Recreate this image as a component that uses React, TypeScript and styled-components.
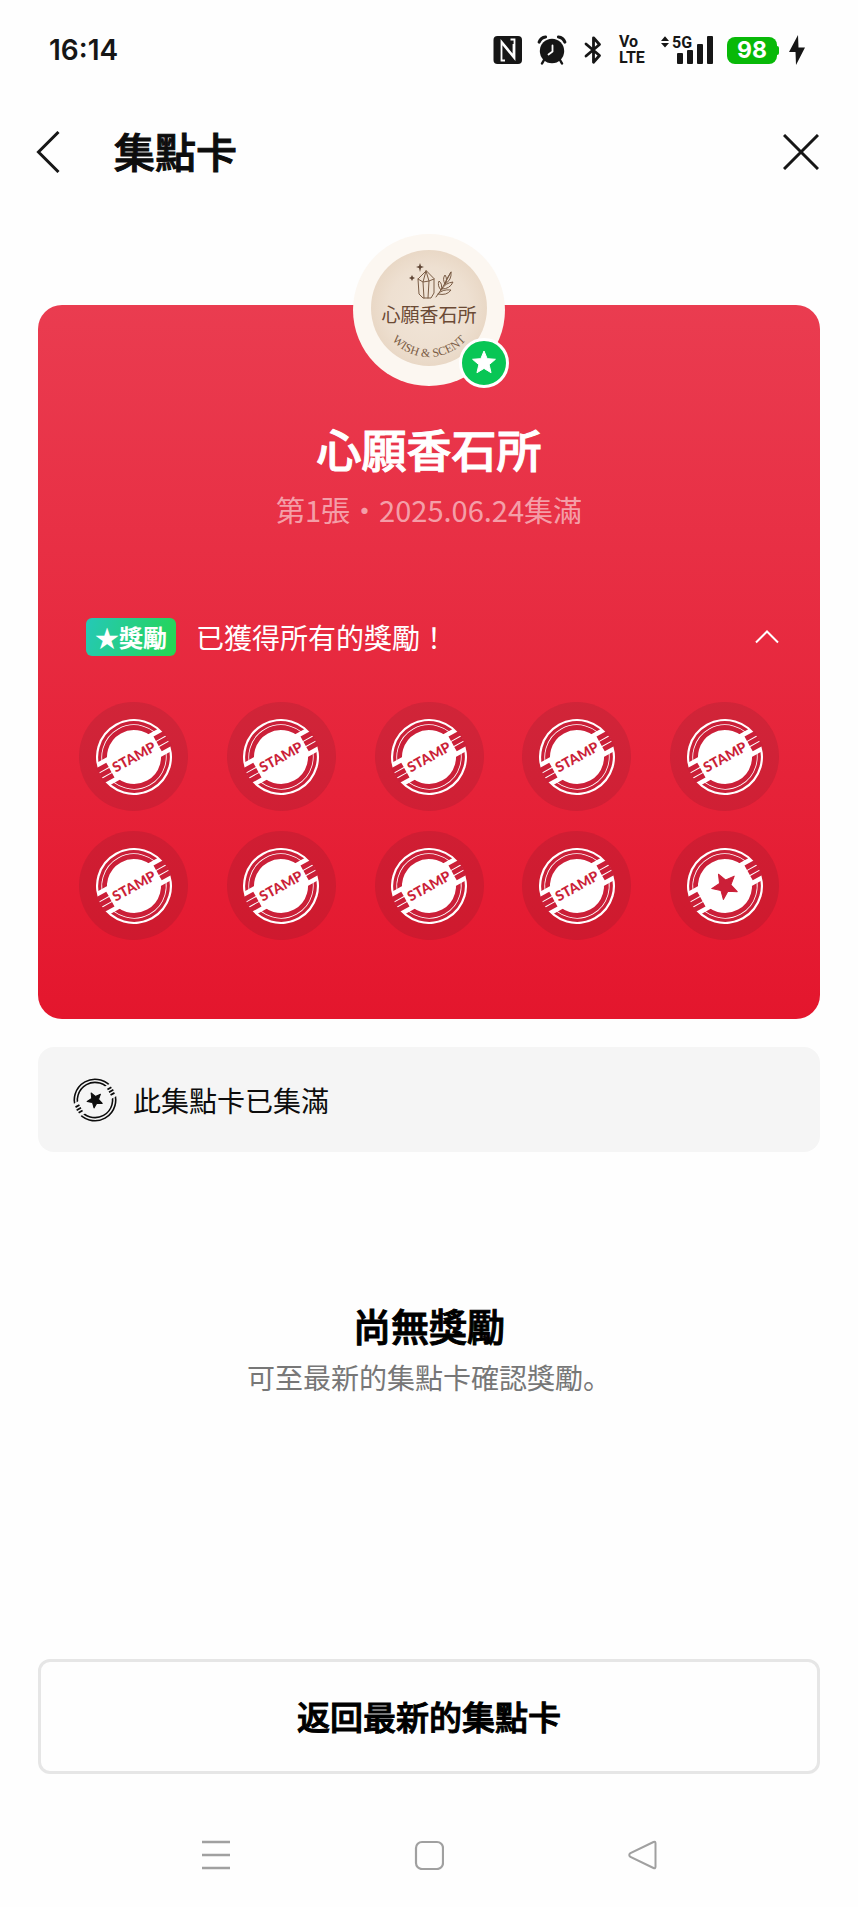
import React from "react";
import styled, { createGlobalStyle } from "styled-components";

const GlobalStyle = createGlobalStyle`
  *, *::before, *::after { box-sizing: border-box; }
  body {
    margin: 0;
    background: #fefefe;
    color: #0d0d0d;
    font-family: "Noto Sans CJK JP", "Noto Sans", sans-serif;
  }
  h1, h2, h3, p, ul { margin: 0; padding: 0; }
  button {
    border: 0;
    padding: 0;
    background: none;
    color: inherit;
    font: inherit;
    cursor: pointer;
  }
  svg { display: block; flex: none; }
`;

const Page = styled.div`
  min-height: 100vh;
  display: flex;
  flex-direction: column;
`;

const StatusBar = styled.div`
  height: 100px;
  padding: 0 53px 0 49px;
  display: flex;
  align-items: center;
  justify-content: space-between;
  color: #161616;
`;

const Clock = styled.time`
  font: 600 28px/40px Inter, sans-serif;
`;

const StatusIcons = styled.div`
  display: flex;
  align-items: center;
  gap: 14px;
`;

const PowerGroup = styled.div`
  display: flex;
  align-items: center;
  gap: 10px;
`;

const VoLte = styled.span`
  width: 28px;
  display: flex;
  flex-direction: column;
  font: 700 16px/16px Roboto, sans-serif;
`;

const Battery = styled.span`
  position: relative;
  width: 50px;
  height: 27px;
  margin-right: 2px;
  border-radius: 8px;
  background: #08b908;
  color: #fff;
  text-align: center;
  font: 700 23px/27px Inter, sans-serif;

  &::after {
    content: "";
    position: absolute;
    left: 100%;
    top: 9px;
    width: 2px;
    height: 9px;
    border-radius: 0 2px 2px 0;
    background: #08b908;
  }
`;

const Header = styled.header`
  height: 104px;
  padding: 0 33px 0 24px;
  display: flex;
  align-items: center;
`;

const IconButton = styled.button`
  width: 48px;
  height: 56px;
  display: grid;
  place-items: center;
`;

const PageTitle = styled.h1`
  flex: 1;
  margin-left: 42px;
  padding-bottom: 4px;
  font-size: 41px;
  line-height: 56px;
  font-weight: 500;
  -webkit-text-stroke: 1px currentColor;
`;

const Content = styled.main`
  flex: 1;
  padding: 101px 38px 0;
`;

const Card = styled.section`
  display: flex;
  flex-direction: column;
  align-items: center;
  padding: 0 41px 79px;
  border-radius: 24px;
  background: linear-gradient(#ea3c50, #e4162d);
  color: #fff;
`;

const Avatar = styled.div`
  position: relative;
  margin-top: -71px;
`;

const AvatarBadge = styled.span`
  position: absolute;
  right: -4px;
  bottom: -2px;
  width: 50px;
  height: 50px;
  display: grid;
  place-items: center;
  border: 3px solid #fff;
  border-radius: 50%;
  background: #08c655;
`;

const ShopName = styled.h2`
  margin-top: 35px;
  font-size: 45px;
  line-height: 56px;
  font-weight: 500;
  -webkit-text-stroke: 1px currentColor;
`;

const CardInfo = styled.p`
  margin-top: 12px;
  font-size: 29px;
  line-height: 40px;
  color: rgba(255, 255, 255, 0.55);
`;

const RewardToggle = styled.button`
  align-self: stretch;
  margin-top: 88px;
  padding: 0 0 0 7px;
  display: flex;
  align-items: center;
  text-align: left;
  font-size: 28px;
  line-height: 40px;
`;

const RewardTag = styled.span`
  height: 38px;
  padding: 0 9px;
  border-radius: 6px;
  background: linear-gradient(110deg, #25c8b8, #25d650);
  font-size: 24px;
  line-height: 38px;
  font-weight: 700;
`;

const RewardText = styled.span`
  flex: 1;
  margin-left: 20px;
`;

const StampGrid = styled.ul`
  align-self: stretch;
  margin-top: 45px;
  display: grid;
  grid-template-columns: repeat(5, 109px);
  justify-content: space-between;
  row-gap: 20px;
  list-style: none;
`;

const StampSlot = styled.li`
  height: 109px;
  display: grid;
  place-items: center;
  border-radius: 50%;
  background: rgba(20, 20, 30, 0.1);
`;

const Notice = styled.p`
  margin-top: 28px;
  min-height: 105px;
  padding: 0 35px;
  display: flex;
  align-items: center;
  gap: 16px;
  border-radius: 16px;
  background: #f5f5f5;
  font-size: 28px;
  line-height: 40px;
`;

const EmptyState = styled.section`
  margin: 147px 0 60px;
  text-align: center;
`;

const EmptyTitle = styled.h3`
  color: #000;
  font-size: 38px;
  line-height: 52px;
  font-weight: 500;
  -webkit-text-stroke: 1px currentColor;
`;

const EmptyText = styled.p`
  margin-top: 6px;
  font-size: 28px;
  line-height: 40px;
  color: #777;
`;

const Footer = styled.footer`
  padding: 0 38px 29px;
`;

const LatestCardButton = styled.button`
  width: 100%;
  height: 115px;
  padding-bottom: 2px;
  border: 3px solid #e6e6e6;
  border-radius: 12px;
  color: #000;
  font-size: 33px;
  font-weight: 500;
  -webkit-text-stroke: 1px currentColor;
`;

const SystemNav = styled.nav`
  height: 104px;
  padding: 0 110px;
  display: grid;
  grid-template-columns: repeat(3, 1fr);
  place-items: center;
`;

/** Points of a five-pointed star centred on the origin. */
function starPoints(outer: number, inner: number, turn = 0): string {
  return Array.from({ length: 10 }, (_, i) => {
    const r = i % 2 ? inner : outer;
    const a = ((i * 36 - 90 + turn) * Math.PI) / 180;
    return `${(r * Math.cos(a)).toFixed(2)},${(r * Math.sin(a)).toFixed(2)}`;
  }).join(" ");
}

const STAMP_RED = "#cb1f38";

function Stamp({ goal }: { goal?: boolean }) {
  return (
    <svg width="76" height="76" viewBox="-38 -38 76 76" role="img" aria-label={goal ? "完成" : "已蓋章"}>
      <defs>
        <clipPath id="stamp-halves">
          <rect x="-40" y="-40" width="80" height="27" />
          <rect x="-40" y="13" width="80" height="27" />
        </clipPath>
      </defs>
      <g transform="rotate(-29)">
        <circle r="38" fill="#fff" />
        <g clipPath="url(#stamp-halves)" fill="none" stroke={STAMP_RED}>
          <circle r="34.2" strokeWidth="3.2" />
          <circle r="29.4" strokeWidth="4.8" />
        </g>
        {[-1, 1].map((side) => (
          <g key={side} transform={`scale(${side} 1)`} fill={STAMP_RED}>
            <path d="M27-8.500H38.500V-3.400H27ZM27-2.400H38.500V2.400H27ZM27 3.400H38.500V8.500H27Z" />
          </g>
        ))}
        {goal ? (
          <polygon
            points={starPoints(13.5, 6)}
            fill={STAMP_RED}
            stroke={STAMP_RED}
            strokeWidth="1"
            strokeLinejoin="round"
          />
        ) : (
          <text
            y="5"
            textAnchor="middle"
            fill={STAMP_RED}
            fontFamily="Lato, sans-serif"
            fontWeight="900"
            fontSize="14"
          >
            STAMP
          </text>
        )}
      </g>
    </svg>
  );
}

function StampOutline() {
  return (
    <svg width="44" height="44" viewBox="-22 -22 44 44" aria-hidden="true">
      <defs>
        <clipPath id="outline-halves">
          <rect x="-24" y="-24" width="48" height="17" />
          <rect x="-24" y="7" width="48" height="17" />
        </clipPath>
      </defs>
      <g transform="rotate(-29)">
        <g clipPath="url(#outline-halves)" fill="none" stroke="#0d0d0d">
          <circle r="20.7" strokeWidth="1.6" />
          <circle r="17.6" strokeWidth="1.6" />
        </g>
        <path
          d="M16-3.200H20.500M16 0H21M16 3.200H20.500M-16-3.200H-20.500M-16 0H-21M-16 3.200H-20.500"
          stroke="#0d0d0d"
          strokeWidth="1.8"
        />
        <polygon points={starPoints(8, 3.6)} fill="#0d0d0d" stroke="#0d0d0d" strokeLinejoin="round" />
      </g>
    </svg>
  );
}

function ShopLogo() {
  return (
    <svg width="152" height="152" viewBox="-76 -76 152 152" role="img" aria-label="心願香石所 Wish & Scent">
      <defs>
        <radialGradient id="paper">
          <stop offset="0" stopColor="#f1e5d8" />
          <stop offset="0.7" stopColor="#eee0d1" />
          <stop offset="1" stopColor="#e9d8c6" />
        </radialGradient>
        <path id="motto-arc" d="M-49-2A49 49 0 0 0 49-2" />
      </defs>
      <circle r="76" fill="#fcf7f1" />
      <circle cy="-2" r="58" fill="url(#paper)" />
      <g fill="none" stroke="#7a5c45" strokeWidth="1" strokeLinejoin="round" strokeLinecap="round">
        <path d="M-3-39L-11-31-10-16-6-12 2-12 5-17 5-31ZM-11-31L-6-28 0-29 5-31M-3-39L-6-28-5-12M-3-39L0-29-1-12" />
        <path d="M7-13Q14-22 22-38M12-20Q8-24 10-29Q14-26 12-20M16-26Q13-31 16-35Q19-31 16-26M16-26Q17-31 22-38Q23-30 16-26M13-21Q16-27 24-28Q21-21 13-21M9-16Q13-21 22-20Q18-14 9-16" />
      </g>
      <path
        d="M-9-47L-8-44-5-43-8-42-9-38-10-42-13-43-10-44ZM-17-35L-16-33-14-32-16-31-17-29-18-31-20-32-18-33Z"
        fill="#5f4534"
      />
      <text
        y="12"
        textAnchor="middle"
        fill="#6b4a35"
        fontFamily='"Noto Sans CJK JP", sans-serif'
        fontWeight="400"
        fontSize="19"
      >
        心願香石所
      </text>
      <text fill="#7a5c45" fontFamily='"Liberation Serif", serif' fontSize="12">
        <textPath href="#motto-arc" startOffset="50%" textAnchor="middle">
          WISH &amp; SCENT
        </textPath>
      </text>
    </svg>
  );
}

function NfcIcon() {
  return (
    <svg width="30" height="30" viewBox="0 0 30 30" aria-hidden="true">
      <rect x="0.5" y="1" width="28.5" height="28" rx="4" fill="currentColor" />
      <path
        d="M12 25.500H8.500V6.500L20.500 21V9M17.500 4.500H21.500V23.500L9.500 9"
        fill="none"
        stroke="#fff"
        strokeWidth="1.800"
      />
    </svg>
  );
}

function AlarmIcon() {
  return (
    <svg width="30" height="30" viewBox="0 0 30 30" aria-hidden="true">
      <circle cx="15" cy="16" r="12.200" fill="currentColor" />
      <path
        d="M2.200 7Q4 2.500 8.500 2M27.800 7Q26 2.500 21.500 2"
        stroke="currentColor"
        strokeWidth="3.200"
        fill="none"
        strokeLinecap="round"
      />
      <path d="M7 25L5 28.500M23 25L25 28.500" stroke="currentColor" strokeWidth="2.500" strokeLinecap="round" />
      <path d="M15.500 10.500V16.500L11.500 19.500" stroke="#fff" strokeWidth="1.800" fill="none" strokeLinecap="round" />
    </svg>
  );
}

function BluetoothIcon() {
  return (
    <svg width="24" height="30" viewBox="0 0 24 30" aria-hidden="true">
      <path
        d="M5 9L18.500 20.500L12.500 27.200V2.800L18.500 9.500L5 21"
        fill="none"
        stroke="currentColor"
        strokeWidth="2.800"
        strokeLinejoin="round"
        strokeLinecap="round"
      />
    </svg>
  );
}

function SignalIcon() {
  return (
    <svg width="52" height="40" viewBox="0 -5 52 40" role="img" aria-label="5G" fill="currentColor">
      <path d="M0 6L4 1.200 8 6ZM0 8L4 12.500 8 8Z" />
      <text x="11" y="13" fontFamily="Roboto, sans-serif" fontWeight="700" fontSize="16">
        5G
      </text>
      <rect x="16" y="18" width="6" height="11" rx="1" />
      <rect x="26" y="15" width="6" height="14" rx="1" />
      <rect x="36" y="9" width="6" height="20" rx="1" />
      <rect x="46" y="1" width="6" height="28" rx="1" />
    </svg>
  );
}

export default function App() {
  return (
    <>
      <GlobalStyle />
      <Page>
        <StatusBar>
          <Clock>16:14</Clock>
          <StatusIcons>
            <NfcIcon />
            <AlarmIcon />
            <BluetoothIcon />
            <VoLte>
              <span>Vo</span>
              <span>LTE</span>
            </VoLte>
            <SignalIcon />
            <PowerGroup>
              <Battery>98</Battery>
              <svg width="16" height="30" viewBox="0 0 16 30" aria-hidden="true">
                <path d="M9 0L0 17H6.500L7 30L16 12.500H9.500Z" fill="currentColor" />
              </svg>
            </PowerGroup>
          </StatusIcons>
        </StatusBar>

        <Header>
          <IconButton aria-label="返回">
            <svg width="24" height="42" viewBox="0 0 24 42" fill="none" stroke="#161616" strokeWidth="3">
              <path d="M22.500 1L2.500 21L22.500 41" />
            </svg>
          </IconButton>
          <PageTitle>集點卡</PageTitle>
          <IconButton aria-label="關閉">
            <svg width="36" height="36" viewBox="0 0 36 36" fill="none" stroke="#161616" strokeWidth="3">
              <path d="M1 1L35 35M35 1L1 35" />
            </svg>
          </IconButton>
        </Header>

        <Content>
          <Card>
            <Avatar>
              <ShopLogo />
              <AvatarBadge>
                <svg width="28" height="28" viewBox="-14 -14 28 28" aria-hidden="true">
                  <polygon points={starPoints(12, 5.4)} fill="#fff" stroke="#fff" strokeLinejoin="round" />
                </svg>
              </AvatarBadge>
            </Avatar>
            <ShopName>心願香石所</ShopName>
            <CardInfo>第1張・2025.06.24集滿</CardInfo>
            <RewardToggle aria-expanded="true">
              <RewardTag>★獎勵</RewardTag>
              <RewardText>已獲得所有的獎勵！</RewardText>
              <svg
                width="24"
                height="14"
                viewBox="0 0 24 14"
                fill="none"
                stroke="#fff"
                strokeWidth="2"
                aria-hidden="true"
              >
                <path d="M1 12.500L12 1.500L23 12.500" />
              </svg>
            </RewardToggle>
            <StampGrid>
              {Array.from({ length: 10 }, (_, i) => (
                <StampSlot key={i}>
                  <Stamp goal={i === 9} />
                </StampSlot>
              ))}
            </StampGrid>
          </Card>

          <Notice>
            <StampOutline />
            此集點卡已集滿
          </Notice>

          <EmptyState>
            <EmptyTitle>尚無獎勵</EmptyTitle>
            <EmptyText>可至最新的集點卡確認獎勵。</EmptyText>
          </EmptyState>
        </Content>

        <Footer>
          <LatestCardButton>返回最新的集點卡</LatestCardButton>
        </Footer>

        <SystemNav aria-label="系統導覽">
          <IconButton aria-label="最近使用">
            <svg width="30" height="30" viewBox="0 0 30 30" stroke="#a0a0a0" strokeWidth="2.500">
              <path d="M1 2H29M1 15H29M1 28H29" />
            </svg>
          </IconButton>
          <IconButton aria-label="主畫面">
            <svg width="30" height="30" viewBox="0 0 30 30" fill="none" stroke="#a0a0a0" strokeWidth="2.200">
              <rect x="2" y="2" width="27" height="27" rx="6" />
            </svg>
          </IconButton>
          <IconButton aria-label="上一頁">
            <svg width="30" height="30" viewBox="0 0 30 30" fill="none" stroke="#a0a0a0" strokeWidth="2">
              <path d="M26.500 2Q28.500 1 28.500 3.500V26.500Q28.500 29 26.500 28L3.500 17Q1 15 3.500 13Z" />
            </svg>
          </IconButton>
        </SystemNav>
      </Page>
    </>
  );
}
